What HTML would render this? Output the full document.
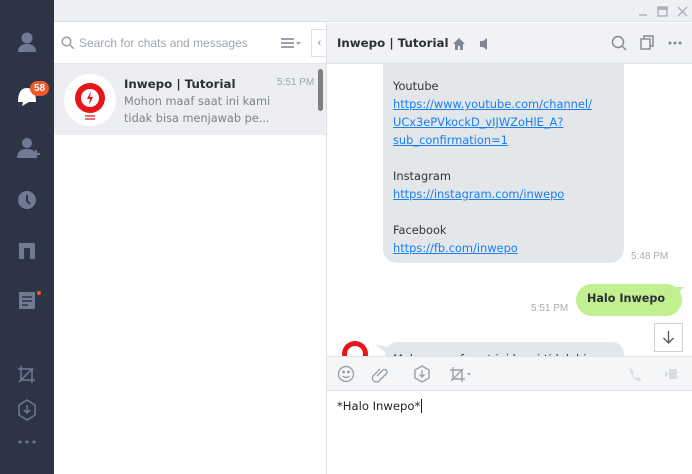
<!DOCTYPE html>
<html><head><style>
*{margin:0;padding:0;box-sizing:border-box}
body{width:692px;height:474px;position:relative;overflow:hidden;font-family:"Liberation Sans","DejaVu Sans",sans-serif;background:#fff}
.a{position:absolute}
.dv{font-family:"DejaVu Sans",sans-serif}
.sb{left:0;top:0;width:54px;height:474px;background:#2d3446}
.ic{fill:#6f7a93}
.lnk{color:#1a7ff0;text-decoration:underline}
</style></head><body>
<div class="a sb">
<svg class="a" style="left:0;top:0" width="54" height="474">
<g class="ic">
<circle cx="27" cy="38" r="5.5"/><path d="M18 52 Q18 44 27 44 Q36 44 36 52Z"/>
<path d="M18 102 Q18 88 27 88 Q36 88 36 102 L29 102 L22 106 L23 102Z" fill="#fff"/>
<circle cx="27" cy="143" r="5"/><path d="M17 158 Q17 149 27 149 Q33 149 35 152 L35 158Z"/><path d="M32 154h8M36 150v8" stroke="#6f7a93" stroke-width="2"/>
<circle cx="27" cy="200" r="9"/><path d="M27 195v6l3 3" stroke="#2d3446" stroke-width="2" fill="none"/>
<path d="M19 243h16v16h-5v-11h-6v11h-5z"/>
<rect x="19" y="292" width="16" height="17"/><path d="M22 297h10M22 301h10M22 305h6" stroke="#2d3446" stroke-width="1.5"/>
</g>
<circle cx="39" cy="293" r="2" fill="#f05a28"/>
<g stroke="#6f7a93" stroke-width="1.5" fill="none">
<path d="M21 366v14h14M18 369h14v14M19 382l14-14"/>
<path d="M27 400l8 5v10l-8 5-8-5v-10z"/><path d="M27 405v8M24 410l3 3 3-3"/>
</g>
<g class="ic"><circle cx="20" cy="442" r="1.5"/><circle cx="27" cy="442" r="1.5"/><circle cx="34" cy="442" r="1.5"/></g>
</svg>
<div class="a" style="left:30px;top:81px;background:#f05a28;color:#fff;font-size:10px;font-weight:bold;border-radius:8px;padding:1px 4px;line-height:13px">58</div>
</div>
<div class="a" style="left:54px;top:0;width:638px;height:22px;background:#eef1f4;border-bottom:1px solid #dde1e6"></div>
<svg class="a" style="left:636px;top:4px" width="56" height="16" stroke="#aab2bd" fill="none" stroke-width="1.5">
<path d="M3 11h8"/><rect x="22" y="3" width="9" height="9"/><path d="M22 4.5h9" stroke-width="3"/><path d="M42 3l9 9M51 3l-9 9"/>
</svg>
<div class="a" style="left:54px;top:23px;width:272px;height:41px;background:#fff;border-bottom:1px solid #e4e7ea"></div>
<svg class="a" style="left:61px;top:36px" width="14" height="14" stroke="#9aa1ab" stroke-width="1.6" fill="none"><circle cx="5.5" cy="5.5" r="4.3"/><path d="M8.7 8.7l4 4"/></svg>
<div class="a" style="left:79px;top:36px;font-size:12px;color:#a0a6ae">Search for chats and messages</div>
<svg class="a" style="left:281px;top:37px" width="22" height="12" fill="#9aa1ab"><rect x="0" y="1" width="13" height="2"/><rect x="0" y="5" width="13" height="2"/><rect x="0" y="9" width="13" height="2"/><path d="M15 5h5l-2.5 3z"/></svg>
<div class="a" style="left:311px;top:29px;width:16px;height:28px;border:1px solid #dde1e6;border-right:none;background:#fff;color:#888;font-size:11px;line-height:26px;text-align:center">‹</div>
<div class="a" style="left:54px;top:64px;width:272px;height:71px;background:#eceef1"></div>
<div class="a" style="left:64px;top:74px;width:52px;height:52px;border-radius:50%;background:#fff"></div>
<svg class="a" style="left:64px;top:74px" width="52" height="52"><circle cx="26" cy="24" r="15" fill="#e6141b"/><circle cx="26" cy="24" r="9" fill="#fff"/><path d="M27 17l-4 8h3l-1 6 4-8h-3z" fill="#e6141b"/><path d="M21 42h10M21 45h10" stroke="#e6141b" stroke-width="1.2"/></svg>
<div class="a dv" style="left:124px;top:77px;font-size:11.8px;font-weight:bold;color:#2b2f36">Inwepo | Tutorial</div>
<div class="a" style="left:277px;top:77px;font-size:10px;color:#a0a6ae">5:51 PM</div>
<div class="a dv" style="left:124px;top:93px;font-size:11.3px;color:#7c838c;line-height:17px">Mohon maaf saat ini kami<br>tidak bisa menjawab pe...</div>
<div class="a" style="left:318px;top:69px;width:5px;height:42px;border-radius:3px;background:#7f7f7f"></div>
<div class="a" style="left:326px;top:23px;width:1px;height:451px;background:#dde1e6"></div>
<div class="a" style="left:327px;top:23px;width:365px;height:41px;background:#f0f2f5;border-bottom:1px solid #e1e4e8"></div>
<div class="a dv" style="left:337px;top:36px;font-size:11.8px;font-weight:bold;color:#2b2f36">Inwepo | Tutorial</div>
<svg class="a" style="left:452px;top:37px" width="42" height="14" fill="#808791"><path d="M1 7l6-6 6 6h-2v6h-3v-4h-2v4h-3v-6z"/><path d="M28 4h3l4-3v12l-4-3h-3z"/></svg>
<svg class="a" style="left:610px;top:34px" width="76" height="18" stroke="#808791" stroke-width="1.4" fill="none"><circle cx="8" cy="8" r="5.5"/><path d="M12 12l4 4"/><rect x="31" y="5" width="9" height="10"/><path d="M34 5V2h9v10h-3"/><g fill="#808791" stroke="none"><circle cx="60" cy="9" r="1.5"/><circle cx="65" cy="9" r="1.5"/><circle cx="70" cy="9" r="1.5"/></g></svg>
<div class="a" style="left:383px;top:64px;width:241px;height:199px;background:#e4e7ea;border-radius:0 0 14px 14px"></div>
<div class="a dv" style="left:393px;top:77px;font-size:11.4px;line-height:18px;color:#333;white-space:nowrap">Youtube<br><span class="lnk">https://www.youtube.com/channel/</span><br><span class="lnk">UCx3ePVkockD_vIJWZoHlE_A?</span><br><span class="lnk">sub_confirmation=1</span><br><br>Instagram<br><span class="lnk">https://instagram.com/inwepo</span><br><br>Facebook<br><span class="lnk">https://fb.com/inwepo</span></div>
<div class="a" style="left:631px;top:251px;font-size:10px;color:#a8adb4">5:48 PM</div>
<div class="a" style="left:576px;top:284px;width:106px;height:32px;background:#c2ef8f;border-radius:16px"></div>
<svg class="a" style="left:670px;top:285px" width="20" height="14"><path d="M0 2L14 2L4 12Z" fill="#c2ef8f"/></svg>
<div class="a dv" style="left:587px;top:292px;font-size:11.2px;font-weight:bold;color:#2b2f36">Halo Inwepo</div>
<div class="a" style="left:531px;top:303px;font-size:10px;color:#a8adb4">5:51 PM</div>
<div class="a" style="left:654px;top:323px;width:29px;height:29px;border:1px solid #cfd3d8;background:#fff"></div>
<svg class="a" style="left:661px;top:330px" width="15" height="15" stroke="#555" stroke-width="1.3" fill="none"><path d="M7.5 1v12M2.5 8l5 5 5-5"/></svg>
<div class="a" style="left:342px;top:341px;width:26px;height:26px;border-radius:50%;background:#e6141b"></div>
<div class="a" style="left:347px;top:346px;width:16px;height:16px;border-radius:50%;background:#fff"></div>
<div class="a" style="left:385px;top:342px;width:239px;height:20px;background:#e4e7ea;border-radius:12px 12px 0 0"></div>
<svg class="a" style="left:374px;top:344px" width="14" height="10"><path d="M0 0L14 3L14 10Z" fill="#e4e7ea"/></svg>
<div class="a dv" style="left:393px;top:352px;font-size:11.4px;color:#333">Mohon maaf saat ini kami tidak bisa</div>
<div class="a" style="left:327px;top:356px;width:365px;height:35px;background:#f5f6f7;border-top:1px solid #e1e4e8;border-bottom:1px solid #e1e4e8"></div>
<svg class="a" style="left:336px;top:364px" width="350" height="20" stroke="#9aa1ab" stroke-width="1.4" fill="none">
<circle cx="10" cy="10" r="7.5"/><circle cx="7.5" cy="8" r=".8" fill="#9aa1ab"/><circle cx="12.5" cy="8" r=".8" fill="#9aa1ab"/><path d="M6.5 12q3.5 3 7 0"/>
<path d="M41 12l6-6a2.5 2.5 0 0 1 3.5 3.5l-8 8a4 4 0 0 1-5.5-5.5l7-7"/>
<path d="M86 2l7 4v8l-7 4-7-4v-8z"/><path d="M86 6v7M83.5 10.5l2.5 2.5 2.5-2.5"/>
<path d="M117 3v12h12M114 6h12v12M115 17l12-12"/><path d="M131 9h4l-2 2.5z" fill="#9aa1ab" stroke="none"/>
<path d="M295 4q-2 1 0 6q3 6 8 7q2 0 2-2l-3-2-1.5 1.5q-3-2-4-4l1.5-1.5-2-3z" fill="#d8dbe0" stroke="none"/>
<path d="M329 7l3 2v2l-3 2zM333 5h8v10h-8z" fill="#d8dbe0" stroke="none"/>
</svg>
<div class="a dv" style="left:337px;top:399px;font-size:11.6px;color:#222"><span style="border-right:1px solid #222;padding-right:1px">*Halo Inwepo*</span></div>
</body></html>
